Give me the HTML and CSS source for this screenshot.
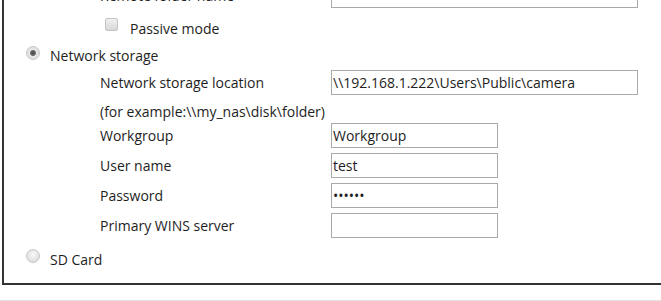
FILE: index.html
```html
<!DOCTYPE html>
<html lang="en">
<head>
<meta charset="UTF-8">
<title>Storage settings</title>
<link rel="stylesheet" href="styles.css">
</head>
<body>

<fieldset class="storage">
    <div class="row">
        <label class="label">Remote folder name</label>
        <input class="field wide" type="text">
    </div>
    <div class="row passive">
        <input class="check" type="checkbox" id="passive">
        <label for="passive">Passive mode</label>
    </div>

    <div class="choice net">
        <input class="radio" type="radio" name="target" id="nas" checked>
        <label for="nas">Network storage</label>
    </div>
    <div class="row">
        <label class="label">Network storage location</label>
        <input class="field wide" type="text" value="\\192.168.1.222\Users\Public\camera">
    </div>
    <div class="row hint">
        <span>(for example:\\my_nas\disk\folder)</span>
    </div>
    <div class="row first">
        <label class="label">Workgroup</label>
        <input class="field" type="text" value="Workgroup">
    </div>
    <div class="row">
        <label class="label">User name</label>
        <input class="field" type="text" value="test">
    </div>
    <div class="row">
        <label class="label">Password</label>
        <input class="field" type="password" value="123456">
    </div>
    <div class="row">
        <label class="label">Primary WINS server</label>
        <input class="field" type="text">
    </div>

    <div class="choice sd">
        <input class="radio" type="radio" name="target" id="sd">
        <label for="sd">SD Card</label>
    </div>
</fieldset>

<div class="footer"></div>

</body>
</html>
```

FILE: styles.css
```css
body {
    font-family: "Open Sans", "DejaVu Sans", sans-serif;
    font-size: 14px;
    color: #1e1e1e;
    margin: 0;
    padding: 0;
    overflow: hidden;
}
.storage {
    margin: -22px 0 0 2px;
    padding: 0 0 11px 0;
    border: 2px solid #333;
    border-right: none;
    min-width: 0;
}
.row {
    display: flex;
    align-items: center;
    height: 30px;
    padding-left: 96px;
}
.label {
    width: 231px;
}
.field {
    width: 167px;
    height: 25px;
    box-sizing: border-box;
    border: 1px solid #a9a9a9;
    padding: 0 1px;
    margin: 0;
    font-family: inherit;
    font-size: 14px;
    color: #1e1e1e;
    outline: none;
}
.field.wide {
    width: 307px;
}
.passive {
    height: 28px;
    padding-left: 101px;
}
.passive label {
    margin-left: 12px;
    padding-top: 8px;
}
.hint {
    height: 24px;
}
.hint span {
    padding-top: 4px;
}
.first {
    height: 29px;
}
.choice {
    display: flex;
    align-items: center;
    height: 32px;
    padding-left: 22px;
}
.choice label {
    margin-left: 10px;
    padding-top: 6px;
}
.net {
    height: 29px;
}
.check {
    appearance: none;
    width: 13px;
    height: 13px;
    margin: 0;
    border: 1px solid #c4c4c4;
    border-radius: 2px;
    background: linear-gradient(#f0f0f0, #d8d8d8);
    box-sizing: border-box;
}
.radio {
    appearance: none;
    width: 14px;
    height: 14px;
    margin: 0;
    border: 1px solid #c8c8c8;
    border-radius: 50%;
    background: radial-gradient(circle at 50% 40%, #fafafa 0%, #dcdcdc 75%);
    box-sizing: border-box;
}
.radio:checked {
    background: radial-gradient(circle, #4a4a4a 0, #6a6a6a 2.5px, #e8e8e8 3.5px, #d6d6d6 100%);
}
.footer {
    margin-top: 15px;
    height: 3px;
    background-color: #ececec;
    border-top: 1px solid #e2e2e2;
}
```
